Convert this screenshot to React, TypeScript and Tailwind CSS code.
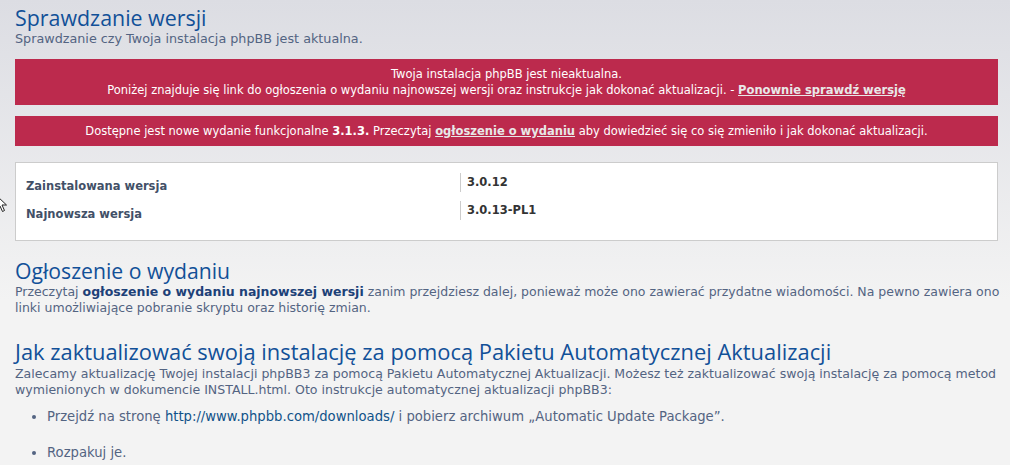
import React from "react";

const body = "font-['DejaVu_Sans',Verdana,sans-serif]";
const head = "font-['Open_Sans','DejaVu_Sans',sans-serif]";

const Pointer = () => (
	<svg
		className="absolute left-[-4px] top-[195px]"
		width="14"
		height="18"
		viewBox="0 0 14 18"
	>
		<path
			d="M1 1 L1 14 L4 11 L6.5 16.5 L8.5 15.5 L6 10 L10.5 10 Z"
			fill="#fff"
			stroke="#222"
			strokeWidth="1"
			strokeLinejoin="round"
		/>
	</svg>
);

type Row = { label: string; value: string };

const rows: Row[] = [
	{ label: "Zainstalowana wersja", value: "3.0.12" },
	{ label: "Najnowsza wersja", value: "3.0.13-PL1" },
];

export default function App() {
	return (
		<div
			className={`relative w-[1010px] h-[465px] overflow-hidden bg-[linear-gradient(#dcdde3,#f3f3f3_300px)] px-[15px] pr-[12px] ${body} text-[11.5px] text-[#536482]`}
		>
			<Pointer />

			<h1 className={`${head} text-[21.4px] leading-[28px] pt-[4px] text-[#115098]`}>
				Sprawdzanie wersji
			</h1>
			<p className="text-[12.75px] leading-[16px] -mt-[1px]">
				Sprawdzanie czy Twoja instalacja phpBB jest aktualna.
			</p>

			<div className="mt-[12px] h-[46px] bg-[#bc2a4d] text-white text-center leading-[16px] pt-[7px]">
				<p>Twoja instalacja phpBB jest nieaktualna.</p>
				<p>
					Poniżej znajduje się link do ogłoszenia o wydaniu najnowszej wersji
					oraz instrukcje jak dokonać aktualizacji. -{" "}
					<a className="font-bold underline text-[#e8e8e8]">
						Ponownie sprawdź wersję
					</a>
				</p>
			</div>

			<div className="mt-[11px] h-[30px] bg-[#bc2a4d] text-white text-center leading-[16px] pt-[7px]">
				Dostępne jest nowe wydanie funkcjonalne <b>3.1.3.</b> Przeczytaj{" "}
				<a className="font-bold underline text-[#e8e8e8]">
					ogłoszenie o wydaniu
				</a>{" "}
				aby dowiedzieć się co się zmieniło i jak dokonać aktualizacji.
			</div>

			<div className="mt-[16px] h-[79px] bg-white border border-[#cccccc] pt-[10px] px-[10px]">
				{rows.map((r) => (
					<div key={r.label} className="flex h-[28px] items-start">
						<div className="w-[434px] pt-[5px] font-bold text-[#425067] leading-[16px]">
							{r.label}
						</div>
						<div className="border-l border-[#cccccc] h-[19px] pl-[6px] pt-[1px] text-[11.5px] font-bold text-[#333] leading-[16px]">
							{r.value}
						</div>
					</div>
				))}
			</div>

			<h2 className={`${head} mt-[16px] text-[21.2px] leading-[28px] text-[#115098]`}>
				Ogłoszenie o wydaniu
			</h2>
			<p className="text-[12.5px] leading-[16px] -mt-[1px] whitespace-nowrap">
				Przeczytaj{" "}
				<b className="text-[#1d4178]">ogłoszenie o wydaniu najnowszej wersji</b>{" "}
				zanim przejdziesz dalej, ponieważ może ono zawierać przydatne
				wiadomości. Na pewno zawiera ono
				<br />
				linki umożliwiające pobranie skryptu oraz historię zmian.
			</p>

			<h2 className={`${head} mt-[22px] text-[21.9px] leading-[28px] text-[#115098]`}>
				Jak zaktualizować swoją instalację za pomocą Pakietu Automatycznej
				Aktualizacji
			</h2>
			<p className="text-[12.55px] leading-[16px] whitespace-nowrap">
				Zalecamy aktualizację Twojej instalacji phpBB3 za pomocą Pakietu
				Automatycznej Aktualizacji. Możesz też zaktualizować swoją instalację
				za pomocą metod
				<br />
				wymienionych w dokumencie INSTALL.html. Oto instrukcje automatycznej
				aktualizacji phpBB3:
			</p>

			<ul className="mt-[11px] pl-[32px] list-disc text-[13.2px] leading-[16px] marker:text-[#536482]">
				<li className="h-[36px]">
					Przejdź na stronę{" "}
					<a className="text-[#105289]">http://www.phpbb.com/downloads/</a> i
					pobierz archiwum „Automatic Update Package”.
				</li>
				<li>Rozpakuj je.</li>
			</ul>
		</div>
	);
}
